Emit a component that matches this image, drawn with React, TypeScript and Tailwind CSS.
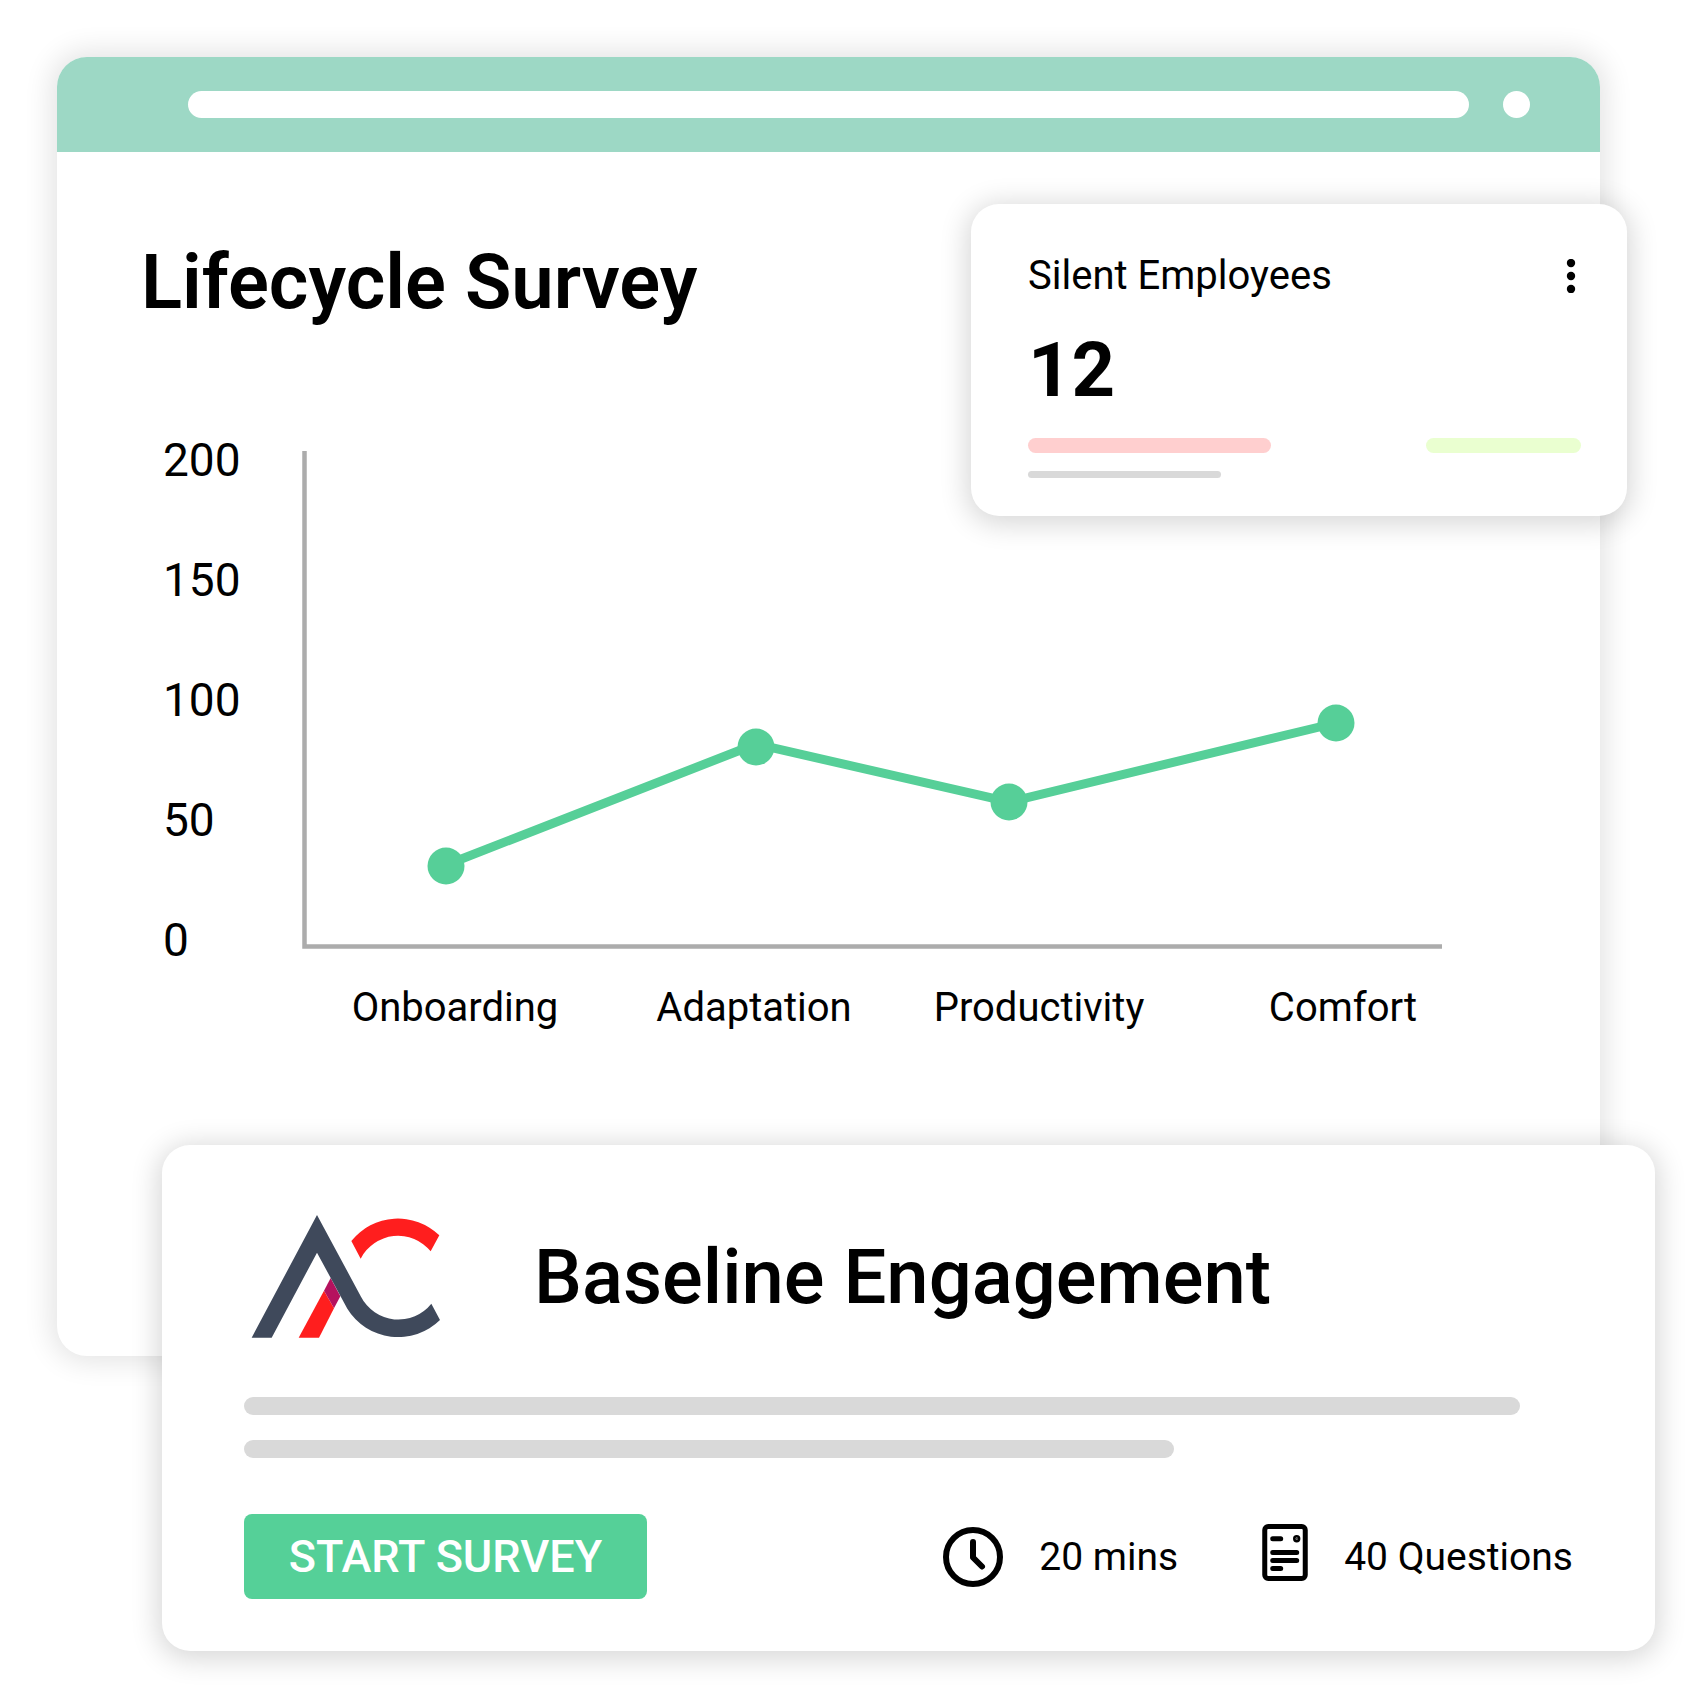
import React from 'react';

const yTicks = [
  { label: '200', y: 36 },
  { label: '150', y: 156 },
  { label: '100', y: 276 },
  { label: '50', y: 396 },
  { label: '0', y: 516 },
];

const stages = [
  { label: 'Onboarding', labelX: 292, x: 283, y: 426 },
  { label: 'Adaptation', labelX: 591, x: 593, y: 307 },
  { label: 'Productivity', labelX: 876, x: 846, y: 362 },
  { label: 'Comfort', labelX: 1180, x: 1173, y: 283 },
];

function LifecycleChart() {
  return (
    <svg viewBox="0 0 1279 600" className="block w-full h-auto overflow-visible" role="img" aria-label="Lifecycle Survey">
      <path d="M141.5 11V506.5H1279" fill="none" stroke="#acacac" strokeWidth="4.5" />
      <polyline points="283,425 593,304 846,362 1173,283" fill="none" stroke="#56cf98" strokeWidth="9" />
      {stages.map((s) => (
        <circle key={s.label} cx={s.x} cy={s.y} r="18.5" fill="#56cf98" />
      ))}
      {yTicks.map((t) => (
        <text key={t.label} x="0" y={t.y} className="text-[46px]">
          {t.label}
        </text>
      ))}
      {stages.map((s) => (
        <text key={s.label} x={s.labelX} y="581" textAnchor="middle" className="text-[40px]">
          {s.label}
        </text>
      ))}
    </svg>
  );
}

function Logo() {
  return (
    <svg viewBox="72 105 591 369" className="w-[197px] h-[123px] shrink-0" aria-hidden="true">
      <path d="M236 473L312 332L342 385L297 473Z" fill="#ff1e1e" />
      <path d="M312 332L332 294L361 349L342 385Z" fill="#b5125e" />
      <path d="M394 183A179 179 0 0 1 658 166L632 214A126 126 0 0 0 422 236Z" fill="#ff1e1e" />
      <path
        d="M95 473L291 105L423 350A126 126 0 0 0 634 371L660 420A179 179 0 0 1 382 386L291 218L155 473Z"
        fill="#3f495b"
      />
    </svg>
  );
}

function ClockIcon() {
  return (
    <svg viewBox="0 0 60 60" className="w-[60px] h-[60px] shrink-0" fill="none" stroke="currentColor" strokeWidth="6" aria-hidden="true">
      <circle cx="30" cy="30" r="27" />
      <path d="M30 15V30.5L39 39.5" strokeLinecap="round" strokeLinejoin="round" />
    </svg>
  );
}

function QuestionsIcon() {
  return (
    <svg viewBox="0 0 46 66" className="w-[46px] h-[66px] shrink-0" fill="none" stroke="currentColor" strokeWidth="5" strokeLinecap="round" aria-hidden="true">
      <rect x="2.75" y="2.5" width="40.5" height="52" rx="3.5" />
      <path d="M10.7 14.7H18.7M10.7 28.4H34.7M10.7 36.4H34.7M10.7 44.4H18.7" />
      <circle cx="34.7" cy="14.7" r="2.4" strokeWidth="2.6" />
      <circle cx="34.7" cy="14.7" r="0.5" strokeWidth="0.6" />
    </svg>
  );
}

function SilentEmployeesCard() {
  return (
    <section className="absolute top-[147px] -right-[27px] w-[656px] rounded-[28px] bg-white pt-[52px] pr-[46px] pb-[38px] pl-[57px] shadow-[0_4px_28px_4px_rgba(0,0,0,0.16)]">
      <div className="flex items-center justify-between">
        <h2 className="text-[40px] leading-none">Silent Employees</h2>
        <button type="button" aria-label="More options" className="flex w-5 justify-center">
          <svg viewBox="0 0 10 34" className="w-[10px] h-[34px]" fill="currentColor">
            <circle cx="5" cy="4" r="4.2" />
            <circle cx="5" cy="17" r="4.2" />
            <circle cx="5" cy="30" r="4.2" />
          </svg>
        </button>
      </div>
      <p className="mt-9 text-[76px] leading-none font-bold">12</p>
      <div className="mt-[30px] flex justify-between">
        <div className="h-[15px] w-[243px] rounded-full bg-[#ffcfcf]" />
        <div className="h-[15px] w-[155px] rounded-full bg-[#eaffd0]" />
      </div>
      <div className="mt-[18px] h-[7px] w-[193px] rounded-full bg-[#d9d9d9]" />
    </section>
  );
}

function EngagementCard() {
  return (
    <section className="relative -mt-[211px] mr-[39px] ml-[162px] rounded-[28px] bg-white px-[82px] pt-[70px] pb-[52px] shadow-[0_4px_28px_4px_rgba(0,0,0,0.16)]">
      <div className="flex items-center gap-[93px]">
        <Logo />
        <h2 className="text-[76px] leading-none font-medium whitespace-nowrap">Baseline Engagement</h2>
      </div>

      {/* Description placeholder */}
      <div className="mt-[59px] flex flex-col gap-[25px]">
        <div className="h-[18px] w-[96%] rounded-full bg-[#d9d9d9]" />
        <div className="h-[18px] w-[70%] rounded-full bg-[#d9d9d9]" />
      </div>

      <div className="mt-[56px] flex items-center justify-between">
        <button type="button" className="h-[85px] w-[403px] rounded-lg bg-[#55d098] text-[45px] font-medium text-white">
          START SURVEY
        </button>
        <div className="flex items-center gap-[84px] text-[39px] leading-[42px] whitespace-nowrap">
          <div className="flex items-center gap-9">
            <ClockIcon />
            <span>20 mins</span>
          </div>
          <div className="flex items-center gap-9">
            <QuestionsIcon />
            <span>40 Questions</span>
          </div>
        </div>
      </div>
    </section>
  );
}

export default function App() {
  return (
    <main className="overflow-hidden bg-white pt-[57px] pb-10 font-['Roboto',sans-serif] text-black">
      <div className="relative mr-[94px] ml-[57px] rounded-[30px] bg-white shadow-[0_0_28px_6px_rgba(0,0,0,0.11)]">
        {/* Browser bar */}
        <div className="flex h-[95px] items-center gap-[34px] rounded-t-[30px] bg-[#9dd8c5] pr-[70px] pl-[131px]">
          <div className="h-[27px] flex-1 rounded-full bg-white" />
          <div className="size-[27px] rounded-full bg-white" />
        </div>

        <div className="pt-[92px] pr-[158px] pb-[316px]">
          <h1 className="pl-[84px] text-[76px] leading-none font-semibold">Lifecycle Survey</h1>
          <div className="mt-[120px] pl-[106px]">
            <LifecycleChart />
          </div>
        </div>

        <SilentEmployeesCard />
      </div>

      <EngagementCard />
    </main>
  );
}
